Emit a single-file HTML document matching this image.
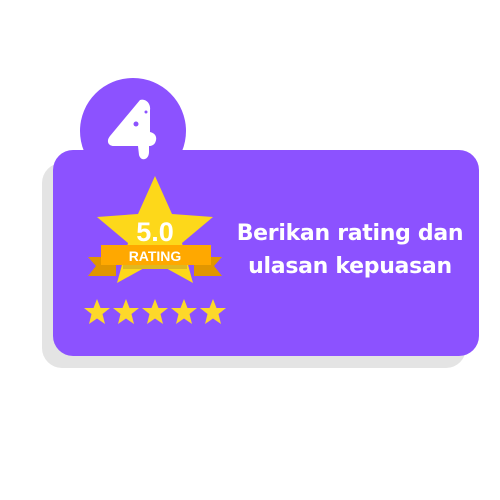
<!DOCTYPE html>
<html><head><style>
body{margin:0;width:500px;height:500px;background:#fff;position:relative;overflow:hidden;font-family:"Liberation Sans",sans-serif}
.sh{position:absolute;left:42px;top:163px;width:424px;height:205px;background:#e4e4e4;border-radius:20px}
.circ{position:absolute;left:80px;top:78px;width:106px;height:106px;border-radius:50%;background:#8c52ff}
.card{position:absolute;left:53px;top:150px;width:426px;height:206px;background:#8c52ff;border-radius:20px}
.txt{position:absolute;left:224px;top:217px;width:252px;text-align:center;color:#fff;font-weight:bold;font-size:22px;line-height:33px;font-family:"DejaVu Sans",sans-serif;letter-spacing:-0.3px}
</style></head><body>
<div class="sh"></div>
<div class="circ"></div>
<div class="card"></div>
<svg style="position:absolute;left:0;top:0" width="500" height="500">
<path d="M140 100 C146 98 151 104 150 110 L150 132 C155 133 158 137 155 143 C153 146 150 146 149 146 L149 152 C149 160 141 162 139 155 L138 146 L114 146 C108 146 106 141 110 136 Z" fill="#fff"/>
<circle cx="136" cy="124" r="2.5" fill="#8c52ff"/>
<circle cx="146" cy="112" r="1.5" fill="#8c52ff"/>
<g>
<polygon points="88,257 116,257 116,276 88,276 96,266" fill="#e19600"/>
<polygon points="222,257 194,257 194,276 222,276 214,266" fill="#e19600"/>
<polygon points="155,176 172,214 213,217 182,243 193,283 155,262 117,283 128,243 97,217 138,214" fill="#fdd81a"/>
<rect x="101" y="245" width="110" height="20" fill="#ffa800"/>
<rect x="123" y="265" width="64" height="4" fill="#e0b820"/>
<text x="155" y="241" text-anchor="middle" font-size="27" font-weight="bold" fill="#fff" font-family="Liberation Sans">5.0</text>
<text x="155" y="261" text-anchor="middle" font-size="14" font-weight="bold" fill="#fff" font-family="Liberation Sans">RATING</text>
</g>
<g fill="#fdd82a">
<polygon id="s" points="97,299 100.5,308 110,308 102.5,314 105,324 97,318.5 89,324 91.5,314 84,308 93.5,308"/>
<use href="#s" x="29"/><use href="#s" x="58"/><use href="#s" x="87"/><use href="#s" x="116"/>
</g>
</svg>
<div class="txt">Berikan rating dan<br>ulasan kepuasan</div>
</body></html>
